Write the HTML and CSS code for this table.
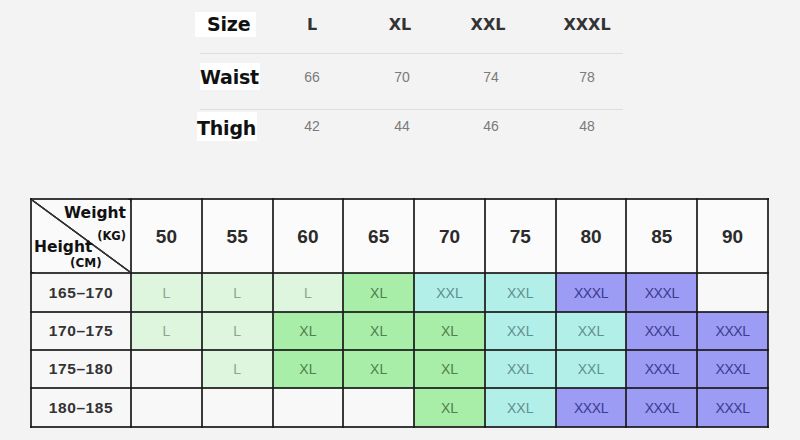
FILE: index.html
```html
<!DOCTYPE html>
<html>
<head>
<meta charset="utf-8">
<link rel="stylesheet" href="styles.css">
</head>
<body>
<div class="spec">
  <div class="spec-row r1">
    <div class="lab"><span class="size">Size</span></div>
    <div class="c c1 head">L</div>
    <div class="c c2 head">XL</div>
    <div class="c c3 head">XXL</div>
    <div class="c c4 head">XXXL</div>
  </div>
  <div class="spec-row r2">
    <div class="lab"><span>Waist</span></div>
    <div class="c c1 val">66</div>
    <div class="c c2 val">70</div>
    <div class="c c3 val">74</div>
    <div class="c c4 val">78</div>
  </div>
  <div class="spec-row r3">
    <div class="lab"><span class="thigh">Thigh</span></div>
    <div class="c c1 val">42</div>
    <div class="c c2 val">44</div>
    <div class="c c3 val">46</div>
    <div class="c c4 val">48</div>
  </div>
</div>

<table class="chart">
  <colgroup>
    <col class="col-h"><col><col><col><col><col><col><col><col><col>
  </colgroup>
  <tr class="hr">
    <td class="corner">
      <div class="corner-in">
        <span class="w">Weight</span>
        <span class="kg">(KG)</span>
        <span class="ht">Height</span>
        <span class="cm">(CM)</span>
      </div>
    </td>
    <td class="n">50</td><td class="n">55</td><td class="n">60</td><td class="n">65</td><td class="n">70</td><td class="n">75</td><td class="n">80</td><td class="n">85</td><td class="n">90</td>
  </tr>
  <tr class="ra">
    <td class="h">165–170</td>
    <td class="l">L</td><td class="l">L</td><td class="l">L</td><td class="xl">XL</td><td class="xxl">XXL</td><td class="xxl">XXL</td><td class="xxxl">XXXL</td><td class="xxxl">XXXL</td><td class="e"></td>
  </tr>
  <tr class="rb">
    <td class="h">170–175</td>
    <td class="l">L</td><td class="l">L</td><td class="xl">XL</td><td class="xl">XL</td><td class="xl">XL</td><td class="xxl">XXL</td><td class="xxl">XXL</td><td class="xxxl">XXXL</td><td class="xxxl">XXXL</td>
  </tr>
  <tr class="rb">
    <td class="h">175–180</td>
    <td class="e"></td><td class="l">L</td><td class="xl">XL</td><td class="xl">XL</td><td class="xl">XL</td><td class="xxl">XXL</td><td class="xxl">XXL</td><td class="xxxl">XXXL</td><td class="xxxl">XXXL</td>
  </tr>
  <tr class="ra">
    <td class="h">180–185</td>
    <td class="e"></td><td class="e"></td><td class="e"></td><td class="e"></td><td class="xl">XL</td><td class="xxl">XXL</td><td class="xxxl">XXXL</td><td class="xxxl">XXXL</td><td class="xxxl">XXXL</td>
  </tr>
</table>
</body>
</html>
```
FILE: styles.css
```css
html, body {
  margin: 0;
  padding: 0;
}
body {
  background: #f3f3f3;
  font-family: "Liberation Sans", Arial, sans-serif;
  width: 800px;
  height: 440px;
  overflow: hidden;
}

/* top spec table */
.spec {
  margin-left: 200px;
  width: 423px;
  height: 150px;
}
.spec-row {
  display: flex;
  align-items: center;
  box-sizing: border-box;
  border-bottom: 1px solid #dedede;
}
.r1 { height: 54px; padding-bottom: 4px; }
.r2 { height: 56px; padding-bottom: 10px; }
.r3 { height: 40px; padding-bottom: 8px; border-bottom: none; }

.lab {
  width: 68px;
  flex-shrink: 0;
}
.lab span {
  display: inline-block;
  background: #fff;
  font-family: "DejaVu Sans", Verdana, sans-serif;
  font-weight: bold;
  font-size: 19px;
  line-height: 24px;
  color: #111;
  padding: 2px 1px 1px 0;
  letter-spacing: -0.2px;
}
.lab span.size { padding: 0 6px 1px 12px; margin-left: -5px; }
.lab span.thigh { margin-left: -3px; padding-top: 4px; }

.c {
  flex-shrink: 0;
  text-align: center;
}
.c1, .c2, .c3 { width: 88px; }
.c4 { width: 110px; }
.head {
  font-family: "DejaVu Sans", Verdana, sans-serif;
  font-weight: bold;
  font-size: 16px;
  color: #333;
}
.val {
  font-size: 14px;
  color: #7a7a7a;
}
.c2.val { padding-left: 4px; box-sizing: border-box; }
.c3.val { padding-left: 6px; box-sizing: border-box; }

/* size chart */
.chart {
  border-collapse: collapse;
  table-layout: fixed;
  width: 739px;
  margin: 48px 0 0 30px;
}
.col-h { width: 100px; }
.chart td {
  border: 2px solid rgba(25, 25, 25, 0.85);
  padding: 0;
  text-align: center;
  font-size: 14px;
}
.hr { height: 74px; }
.ra { height: 39px; }
.rb { height: 38px; }

.chart .corner {
  background: #fafafa linear-gradient(to top right,
    transparent calc(50% - 1.2px),
    #333 calc(50% - 0.6px),
    #333 calc(50% + 0.6px),
    transparent calc(50% + 1.2px));
  text-align: left;
}
.corner-in {
  display: flex;
  flex-direction: column;
  height: 72px;
  font-family: "DejaVu Sans", Verdana, sans-serif;
  font-weight: bold;
  color: #111;
}
.w {
  align-self: flex-end;
  margin: 4px 4px 0 0;
  font-size: 15.5px;
  line-height: 18px;
}
.kg {
  align-self: flex-end;
  margin: 7px 4px 0 0;
  font-size: 11.5px;
  line-height: 14px;
}
.ht {
  align-self: flex-start;
  margin: -5px 0 0 2px;
  font-size: 15.5px;
  line-height: 18px;
}
.cm {
  align-self: flex-start;
  margin: 0 0 0 38px;
  font-size: 12px;
  line-height: 14px;
}

.chart .n {
  background: #fbfbfb;
  font-weight: bold;
  font-size: 19px;
  color: #2b2b2b;
  padding-top: 2px;
}
.chart .h {
  background: #f7f7f7;
  font-weight: bold;
  font-size: 15.5px;
  color: #333;
  letter-spacing: 0.6px;
}
.chart .l { background: #ddf6dd; color: #8ea48e; }
.chart .xl { background: #a8eea8; color: #4f7f4f; }
.chart .xxl { background: #b3efe9; color: #5f908d; }
.chart .xxxl { background: #9d9cf4; color: #3b3b8f; letter-spacing: -0.4px; }
.chart .e { background: #f8f8f8; }
```
